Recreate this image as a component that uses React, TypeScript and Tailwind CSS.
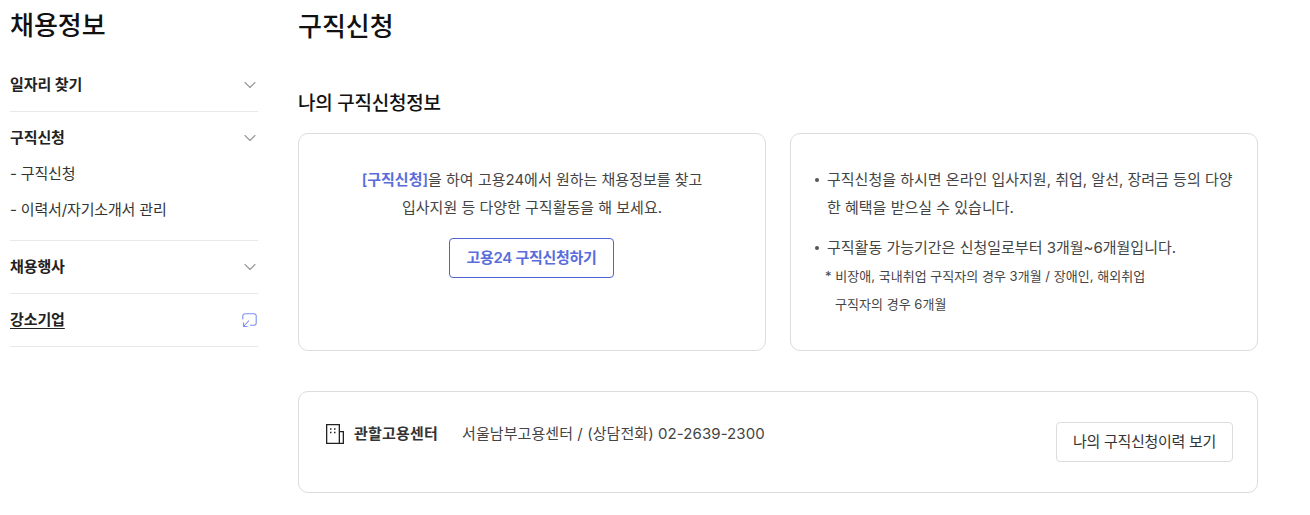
import React from 'react';
import { ChevronDown } from 'lucide-react';

const font = "font-['Inter','Noto_Sans_CJK_KR',sans-serif]";

function MenuRow({ label, sub }: { label: string; sub?: string[] }) {
  return (
    <div className="border-b border-[#e8e8e8]">
      <div className="flex h-[52px] items-center justify-between">
        <span className="text-[15px] font-semibold tracking-[-0.1px] text-[#222]">{label}</span>
        <ChevronDown className="-mr-[2px] h-[20px] w-[20px] text-[#999]" strokeWidth={1.3} />
      </div>
      {sub && (
        <ul className="-mt-[8px] pb-[12px]">
          {sub.map(s => (
            <li key={s} className="flex h-[36px] items-center text-[15px] tracking-[-0.15px] text-[#333]">{s}</li>
          ))}
        </ul>
      )}
    </div>
  );
}

function LinkIcon() {
  return (
    <svg className="mr-[1px]" width="15" height="15" viewBox="0 0 15 15" fill="none" stroke="#7b8ff0" strokeWidth="1.1">
      <path d="M.8 6.500V3a2.200 2.200 0 0 1 2.200-2.200h9a2.200 2.200 0 0 1 2.200 2.200v7a2.200 2.200 0 0 1-2.200 2.200H8" />
      <path d="M7 7.500 1.500 13.500M1.500 9.500v4h4" />
    </svg>
  );
}

function BuildingIcon() {
  return (
    <svg width="18" height="20" viewBox="0 0 18 20" fill="none" stroke="#222" strokeWidth="1.3">
      <path d="M.65.650h12.700v18.700H.65zM13.350 7.650h4v11.700h-4" />
      <path d="M4 5h1.500M8 5h1.500M4 8.500h1.500M8 8.500h1.500" strokeWidth="1.500" />
    </svg>
  );
}

function Bullet() {
  return <span className="mt-[12px] mr-[8px] h-[4px] w-[4px] shrink-0 rounded-full bg-[#555]" />;
}

export default function App() {
  return (
    <div className={`${font} flex h-[515px] w-[1310px] gap-[40px] overflow-hidden bg-white pl-[10px]`}>
      <aside className="w-[248px] shrink-0">
        <h2 className="flex h-[59px] items-start pt-[7px] text-[26px] leading-[38px] font-medium text-[#111]">채용정보</h2>
        <MenuRow label="일자리 찾기" />
        <MenuRow label="구직신청" sub={['- 구직신청', '- 이력서/자기소개서 관리']} />
        <MenuRow label="채용행사" />
        <div className="flex h-[53px] items-center justify-between border-b border-[#e8e8e8]">
          <span className="text-[15px] font-semibold tracking-[-0.1px] text-[#222] underline underline-offset-[3px]">강소기업</span>
          <LinkIcon />
        </div>
      </aside>

      <main className="w-[960px] shrink-0">
        <h1 className="pt-[8px] text-[26px] leading-[38px] font-medium text-[#111]">구직신청</h1>
        <h3 className="mt-[44px] text-[19px] leading-[28px] font-medium tracking-[-0.25px] text-[#111]">나의 구직신청정보</h3>
        <div className="mt-[15px] flex gap-[24px]">
          <section className="flex h-[218px] w-[468px] flex-col items-center rounded-[10px] border border-[#dcdcdc] pt-[32px]">
            <p className="text-center text-[15px] leading-[28px] text-[#444]">
              <b className="font-semibold text-[#5a6ddb]">[구직신청]</b>을 하여 고용24에서 원하는 채용정보를 찾고
              <br />
              입사지원 등 다양한 구직활동을 해 보세요.
            </p>
            <button className="mt-[16px] -ml-[1px] h-[40px] w-[165px] rounded-[4px] border border-[#4f63d2] text-[15px] font-semibold tracking-[-0.3px] text-[#5a6ddb]">
              고용24 구직신청하기
            </button>
          </section>
          <section className="h-[218px] w-[468px] rounded-[10px] border border-[#dcdcdc] pt-[32px] pr-[24px] pl-[24px]">
            <ul className="text-[15px] leading-[28px] text-[#444]">
              <li className="flex">
                <Bullet />
                <span>구직신청을 하시면 온라인 입사지원, 취업, 알선, 장려금 등의 다양한 혜택을 받으실 수 있습니다.</span>
              </li>
              <li className="mt-[12px] flex">
                <Bullet />
                <span>구직활동 가능기간은 신청일로부터 3개월~6개월입니다.</span>
              </li>
            </ul>
            <p className="pl-[10px] text-[13px] leading-[28px] tracking-[0.03px] text-[#444]">
              * 비장애, 국내취업 구직자의 경우 3개월 / 장애인, 해외취업
              <br />
              <span className="pl-[10px]">구직자의 경우 6개월</span>
            </p>
          </section>
        </div>
        <section className="mt-[40px] flex h-[102px] w-[960px] items-start justify-between rounded-[10px] border border-[#dcdcdc] pr-[24px] pl-[27px]">
          <div className="flex items-center pt-[31px]">
            <BuildingIcon />
            <span className="ml-[10px] text-[15px] font-semibold tracking-[0.2px] text-[#333]">관할고용센터</span>
            <span className="ml-[24px] text-[15px] tracking-[0.08px] text-[#444]">서울남부고용센터 / (상담전화) 02-2639-2300</span>
          </div>
          <button className="mt-[30px] h-[40px] w-[177px] rounded-[4px] border border-[#dcdcdc] text-[15px] tracking-[-0.3px] text-[#333]">
            나의 구직신청이력 보기
          </button>
        </section>
      </main>
    </div>
  );
}
